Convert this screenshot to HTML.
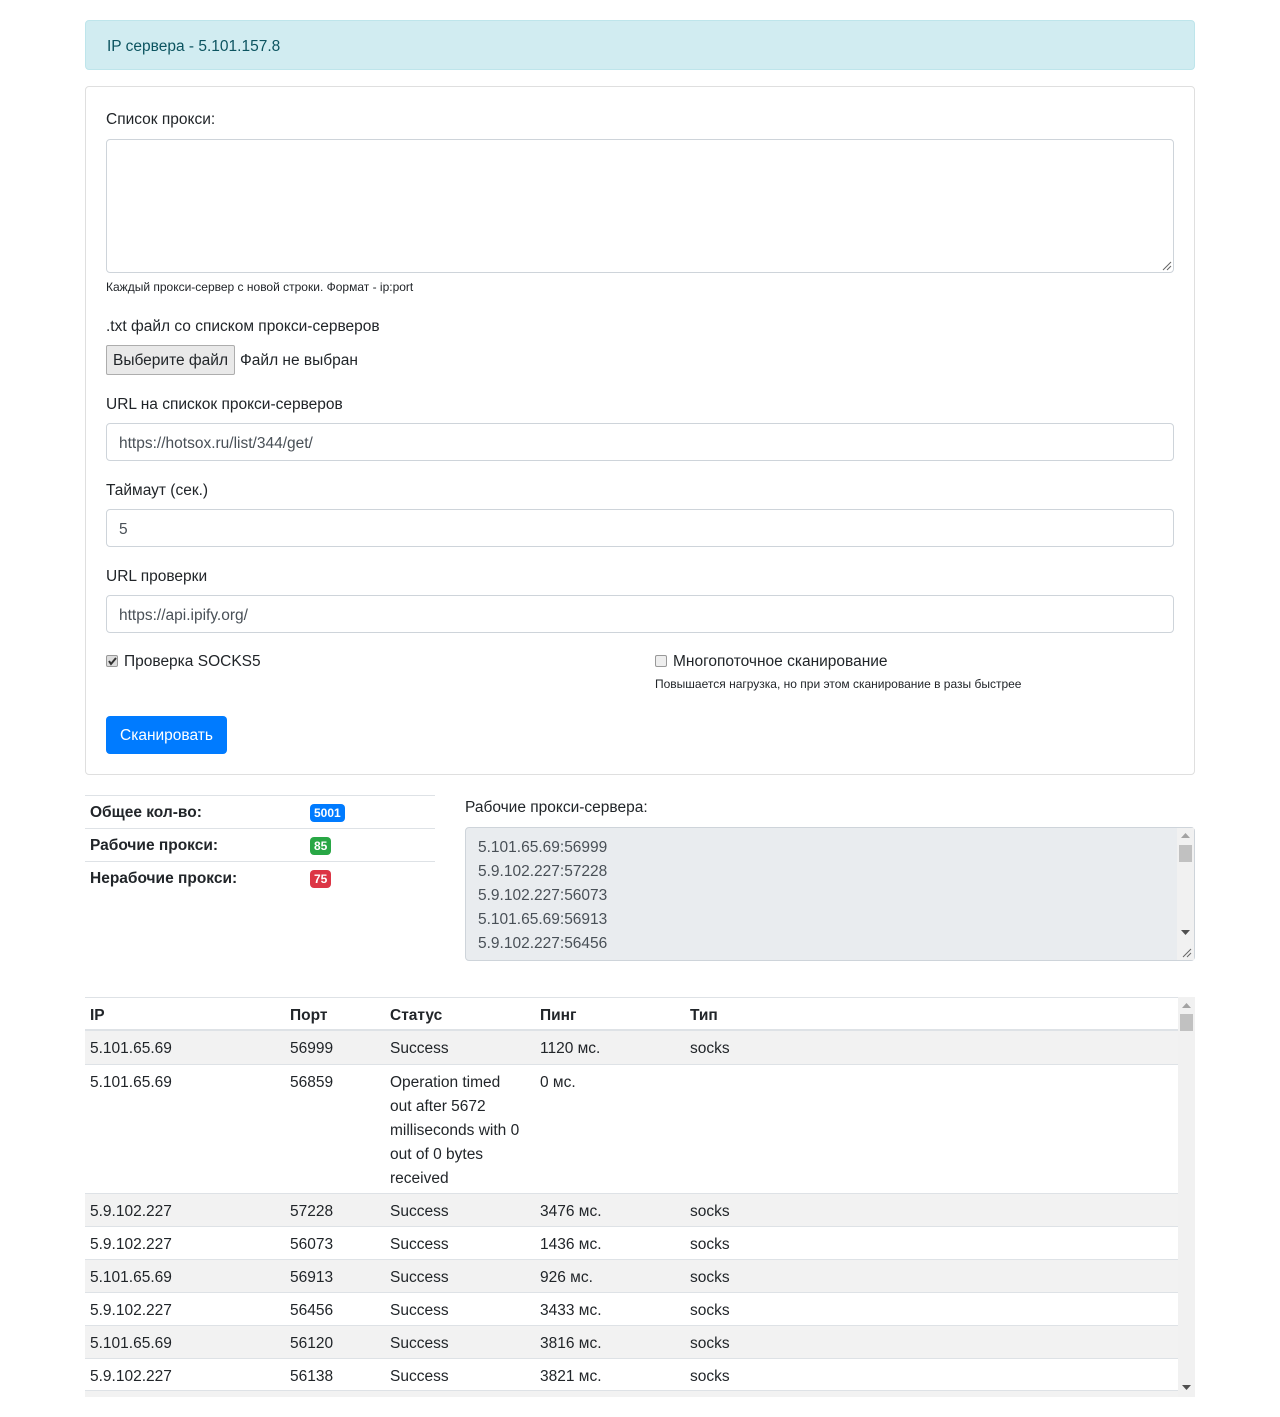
<!DOCTYPE html>
<html><head><meta charset="utf-8">
<style>
*{box-sizing:border-box;margin:0;padding:0}
body{width:1280px;height:1417px;background:#fff;font-family:"Liberation Sans","DejaVu Sans",sans-serif;font-size:15px;color:#212529;position:relative;overflow:hidden}
.a{position:absolute;white-space:nowrap}
.inp{position:absolute;left:106px;width:1068px;height:38px;border:1px solid #ced4da;border-radius:4px;padding:0 12px;line-height:39px;color:#495057;font-size:15.5px}
.badge{position:absolute;left:310px;height:18px;border-radius:4px;color:#fff;font-weight:bold;font-size:12px;line-height:18px;padding:0 4px;font-family:"Liberation Sans",sans-serif}
.srow{position:absolute;left:85px;width:350px;height:33px;border-top:1px solid #dee2e6;font-weight:bold;font-size:15.5px;line-height:34px;padding-left:5px}
.tr{position:absolute;left:85px;width:1093px;border-top:1px solid #dee2e6;font-size:15.5px}
.tr span{position:absolute;top:6px;line-height:24px}
.g{background:#f2f2f2}
.sb{position:absolute;background:#f1f1f1}
</style></head><body>
<div class="a" style="left:85px;top:20px;width:1110px;height:50px;background:#d1ecf1;border:1px solid #bee5eb;border-radius:4px;color:#0c5460;padding-left:21px;line-height:51px;font-size:15.5px">IP сервера - 5.101.157.8</div>
<div class="a" style="left:85px;top:86px;width:1110px;height:689px;border:1px solid #dfdfdf;border-radius:4px"></div>
<div class="a" style="left:106px;top:111px;font-size:15.5px">Список прокси:</div>
<div class="a" style="left:106px;top:139px;width:1068px;height:134px;border:1px solid #ced4da;border-radius:4px"></div>
<svg class="a" style="left:1162px;top:261px" width="10" height="10"><path d="M1 9L9 1M5 9L9 5" stroke="#666" stroke-width="1"/></svg>
<div class="a" style="left:106px;top:280px;font-size:12px;color:#212529">Каждый прокси-сервер с новой строки. Формат - ip:port</div>
<div class="a" style="left:106px;top:318px;font-size:15.5px">.txt файл со списком прокси-серверов</div>
<div class="a" style="left:106px;top:345px;width:129px;height:30px;border:1px solid #adadad;background:#e9e9e9;line-height:30px;text-align:center;font-size:15.5px;border-radius:2px">Выберите файл</div>
<div class="a" style="left:240px;top:352px;font-size:15.5px">Файл не выбран</div>
<div class="a" style="left:106px;top:396px;font-size:15.5px">URL на спискок прокси-серверов</div>
<div class="inp" style="top:423px">https://hotsox.ru/list/344/get/</div>
<div class="a" style="left:106px;top:482px;font-size:15.5px">Таймаут (сек.)</div>
<div class="inp" style="top:509px">5</div>
<div class="a" style="left:106px;top:568px;font-size:15.5px">URL проверки</div>
<div class="inp" style="top:595px">https://api.ipify.org/</div>
<div class="a" style="left:106px;top:655px;width:12px;height:12px;border:1px solid #999;border-radius:2px;background:#ddd"><svg width="10" height="10" style="position:absolute;left:0;top:0"><path d="M2 5L4 8L9 2" stroke="#333" stroke-width="2" fill="none"/></svg></div>
<div class="a" style="left:124px;top:653px;font-size:15.5px">Проверка SOCKS5</div>
<div class="a" style="left:655px;top:655px;width:12px;height:12px;border:1px solid #999;border-radius:2px;background:#eee"></div>
<div class="a" style="left:673px;top:653px;font-size:15.5px">Многопоточное сканирование</div>
<div class="a" style="left:655px;top:677px;font-size:12px">Повышается нагрузка, но при этом сканирование в разы быстрее</div>
<div class="a" style="left:106px;top:716px;width:121px;height:38px;background:#007bff;border-radius:4px;color:#fff;line-height:40px;text-align:center;font-size:15.5px">Сканировать</div>

<div class="srow" style="top:795px">Общее кол-во:</div>
<div class="srow" style="top:828px">Рабочие прокси:</div>
<div class="srow" style="top:861px">Нерабочие прокси:</div>
<div class="badge" style="top:804px;background:#007bff">5001</div>
<div class="badge" style="top:837px;background:#28a745">85</div>
<div class="badge" style="top:870px;background:#dc3545">75</div>

<div class="a" style="left:465px;top:799px;font-size:15.5px">Рабочие прокси-сервера:</div>
<div class="a" style="left:465px;top:827px;width:730px;height:134px;background:#e9ecef;border:1px solid #ced4da;border-radius:4px;padding:8px 12px;line-height:24px;color:#495057;font-size:15.5px">5.101.65.69:56999<br>5.9.102.227:57228<br>5.9.102.227:56073<br>5.101.65.69:56913<br>5.9.102.227:56456</div>
<div class="sb" style="left:1177px;top:828px;width:17px;height:132px"></div>
<div class="a" style="left:1179px;top:845px;width:13px;height:17px;background:#c1c1c1"></div>
<svg class="a" style="left:1181px;top:833px" width="9" height="6"><path d="M0 5L4.5 0L9 5Z" fill="#a3a3a3"/></svg>
<svg class="a" style="left:1181px;top:930px" width="9" height="6"><path d="M0 0L4.5 5L9 0Z" fill="#505050"/></svg>
<svg class="a" style="left:1182px;top:948px" width="10" height="10"><path d="M1 9L9 1M5 9L9 5" stroke="#666" stroke-width="1"/></svg>

<div class="sb" style="left:1178px;top:997px;width:17px;height:400px"></div>
<div class="a" style="left:1180px;top:1014px;width:13px;height:17px;background:#c1c1c1"></div>
<svg class="a" style="left:1182px;top:1003px" width="9" height="6"><path d="M0 5L4.5 0L9 5Z" fill="#a3a3a3"/></svg>
<svg class="a" style="left:1182px;top:1385px" width="9" height="6"><path d="M0 0L4.5 5L9 0Z" fill="#505050"/></svg>
<div class="a g" style="left:85px;top:1391px;width:1093px;height:6px"></div>

<div class="tr" style="top:997px;height:34px;border-bottom:2px solid #dee2e6;font-weight:bold"><span style="left:5px">IP</span><span style="left:205px">Порт</span><span style="left:305px">Статус</span><span style="left:455px">Пинг</span><span style="left:605px">Тип</span></div>
<div class="tr g" style="top:1031px;height:33px;border-top:none"><span style="left:5px">5.101.65.69</span><span style="left:205px">56999</span><span style="left:305px">Success</span><span style="left:455px">1120 мс.</span><span style="left:605px">socks</span></div>
<div class="tr" style="top:1064px;height:129px"><span style="left:5px">5.101.65.69</span><span style="left:205px">56859</span><span style="left:305px">Operation timed<br>out after 5672<br>milliseconds with 0<br>out of 0 bytes<br>received</span><span style="left:455px">0 мс.</span></div>
<div class="tr g" style="top:1193px;height:33px"><span style="left:5px">5.9.102.227</span><span style="left:205px">57228</span><span style="left:305px">Success</span><span style="left:455px">3476 мс.</span><span style="left:605px">socks</span></div>
<div class="tr" style="top:1226px;height:33px"><span style="left:5px">5.9.102.227</span><span style="left:205px">56073</span><span style="left:305px">Success</span><span style="left:455px">1436 мс.</span><span style="left:605px">socks</span></div>
<div class="tr g" style="top:1259px;height:33px"><span style="left:5px">5.101.65.69</span><span style="left:205px">56913</span><span style="left:305px">Success</span><span style="left:455px">926 мс.</span><span style="left:605px">socks</span></div>
<div class="tr" style="top:1292px;height:33px"><span style="left:5px">5.9.102.227</span><span style="left:205px">56456</span><span style="left:305px">Success</span><span style="left:455px">3433 мс.</span><span style="left:605px">socks</span></div>
<div class="tr g" style="top:1325px;height:33px"><span style="left:5px">5.101.65.69</span><span style="left:205px">56120</span><span style="left:305px">Success</span><span style="left:455px">3816 мс.</span><span style="left:605px">socks</span></div>
<div class="tr" style="top:1358px;height:33px;border-bottom:1px solid #dee2e6"><span style="left:5px">5.9.102.227</span><span style="left:205px">56138</span><span style="left:305px">Success</span><span style="left:455px">3821 мс.</span><span style="left:605px">socks</span></div>
</body></html>
